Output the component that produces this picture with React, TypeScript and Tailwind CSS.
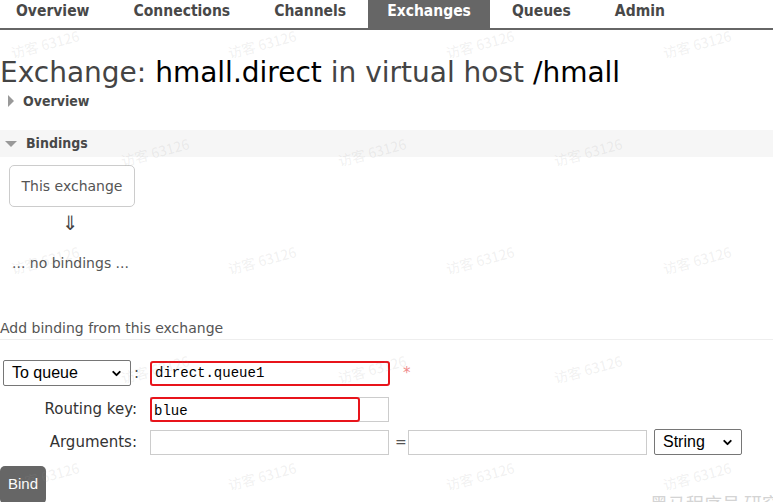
import { ChevronDown } from "lucide-react";

const tabs = ["Overview", "Connections", "Channels", "Exchanges", "Queues", "Admin"];

// faint "visitor" watermark tiled over the page
const marks = [
  { x: 10, y: 44 },
  { x: 227, y: 44 },
  { x: 445, y: 44 },
  { x: 662, y: 44 },
  { x: 120, y: 152 },
  { x: 337, y: 152 },
  { x: 553, y: 152 },
  { x: 10, y: 260 },
  { x: 227, y: 260 },
  { x: 445, y: 260 },
  { x: 662, y: 260 },
  { x: 120, y: 369 },
  { x: 337, y: 369 },
  { x: 553, y: 369 },
  { x: 10, y: 476 },
  { x: 227, y: 476 },
  { x: 445, y: 476 },
  { x: 662, y: 476 },
];

const FakeSelect = ({ label, className }: { label: string; className: string }) => (
  <div
    className={`flex h-[26px] items-center justify-between rounded-[2px] border border-[#767676] bg-white pl-[8px] pr-[7px] font-['Liberation_Sans',sans-serif] text-[16px] text-black ${className}`}
  >
    <span>{label}</span>
    <ChevronDown className="h-[13px] w-[13px]" strokeWidth={3.5} />
  </div>
);

export default function App() {
  return (
    <div className="relative h-[502px] w-[773px] overflow-hidden bg-white font-['DejaVu_Sans',sans-serif] text-[#484848]">
      <nav className="flex h-[30px] items-stretch border-b-2 border-[#666] font-['DejaVu_Sans_Condensed','DejaVu_Sans',sans-serif] text-[15.5px] font-bold">
        {tabs.map((tab, i) => (
          <span
            key={tab}
            className={
              tab === "Exchanges"
                ? "flex items-center bg-[#666] px-[19px] pb-[5px] text-white"
                : `flex items-center pb-[5px] ${i === 0 ? "pl-[16px] pr-[22px]" : "px-[22px]"}`
            }
          >
            {tab}
          </span>
        ))}
      </nav>

      <h1 className="mt-[26px] whitespace-nowrap text-[28px] leading-[34px] text-[#444]">
        Exchange: <span className="text-black">hmall.direct</span> in virtual host{" "}
        <span className="text-black">/hmall</span>
      </h1>

      <div className="mt-[1px] flex h-[20px] items-center gap-[9px] pl-[8px] font-['DejaVu_Sans_Condensed','DejaVu_Sans',sans-serif] text-[14px] font-bold text-[#484848]">
        <span className="h-0 w-0 border-y-[6px] border-l-[6px] border-y-transparent border-l-[#999]" />
        Overview
      </div>

      <div className="mt-[19px] flex h-[27px] items-center gap-[9px] bg-[#f6f6f6] pl-[5px] font-['DejaVu_Sans_Condensed','DejaVu_Sans',sans-serif] text-[14px] font-bold text-[#484848]">
        <span className="mt-[1px] h-0 w-0 border-x-[6px] border-t-[6px] border-x-transparent border-t-[#999]" />
        Bindings
      </div>

      <div className="ml-[9px] mt-[8px] flex h-[42px] w-[126px] items-center justify-center rounded-[5px] border border-[#ccc] text-[14px] text-[#555]">
        This exchange
      </div>
      <div className="ml-[62px] mt-[4px] h-[24px] text-[20px] leading-[24px] text-[#444]">⇓</div>
      <p className="ml-[12px] mt-[18px] text-[14px] leading-[20px] text-[#555]">... no bindings ...</p>

      <p className="mt-[45px] border-b border-[#eee] pb-[1px] text-[14px] leading-[20px] text-[#555]">
        Add binding from this exchange
      </p>

      <div className="mt-[20px] flex h-[26px] items-center">
        <FakeSelect label="To queue" className="ml-[3px] w-[128px]" />
        <span className="ml-[3px] text-[15px]">:</span>
        <input
          readOnly
          value="direct.queue1"
          className="ml-[11px] h-[25px] w-[240px] rounded-[3px] border-2 border-[#e8141b] px-[3px] font-['Liberation_Mono',monospace] text-[14px] text-black outline-none"
        />
        <span className="ml-[13px] text-[15px] text-[#ef8a8a]">*</span>
      </div>

      <div className="mt-[11px] flex h-[25px] items-center">
        <span className="w-[137px] text-right text-[15px] text-[#333]">Routing key:</span>
        <div className="relative ml-[13px] h-[25px] w-[239px] border border-[#ccc]">
          <input
            readOnly
            value="blue"
            className="h-full w-full bg-transparent px-[3px] font-['Liberation_Mono',monospace] text-[14px] text-black outline-none"
          />
          <div className="pointer-events-none absolute -left-px -top-px h-[25px] w-[210px] rounded-[3px] border-2 border-[#e8141b]" />
        </div>
      </div>

      <div className="mt-[7px] flex h-[26px] items-center">
        <span className="w-[137px] text-right text-[15px] text-[#333]">Arguments:</span>
        <input readOnly className="ml-[13px] h-[25px] w-[239px] border border-[#ccc] outline-none" />
        <span className="ml-[6px] w-[13px] text-[14px] text-[#555]">=</span>
        <input readOnly className="h-[25px] w-[239px] border border-[#ccc] outline-none" />
        <FakeSelect label="String" className="ml-[7px] w-[88px]" />
      </div>

      <button className="mt-[11px] h-[38px] rounded-[5px] bg-[#666] px-[8px] pb-[2px] font-['Liberation_Sans',sans-serif] text-[15px] text-white">
        Bind
      </button>

      <div className="pointer-events-none absolute inset-0 font-['Noto_Sans_CJK_SC',sans-serif] text-[14px] text-[#999]/15">
        {marks.map((m) => (
          <span
            key={`${m.x}-${m.y}`}
            className="absolute -rotate-[15deg] whitespace-nowrap leading-[20px]"
            style={{ left: m.x, top: m.y - 10 }}
          >
            访客 63126
          </span>
        ))}
        <span className="absolute left-[650px] top-[492px] whitespace-nowrap text-[18px] leading-[22px] text-[#d4d4d4]">
          黑马程序员 研究院
        </span>
      </div>
    </div>
  );
}
